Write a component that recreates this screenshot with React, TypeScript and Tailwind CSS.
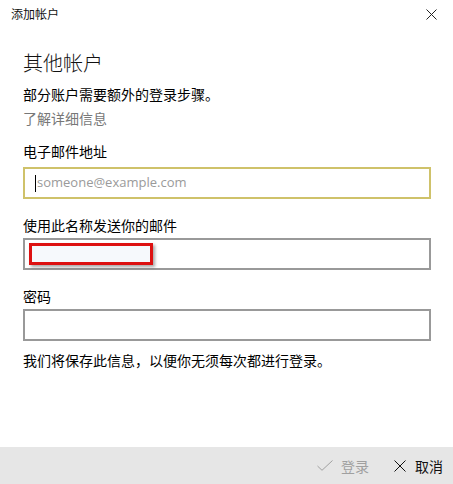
import React from "react";

const cjk = { fontFamily: '"Noto Sans CJK SC", "Microsoft YaHei", sans-serif' };

function XIcon({ size, color, stroke = 1 }: { size: number; color: string; stroke?: number }) {
  return (
    <svg width={size} height={size} viewBox={`0 0 ${size} ${size}`} fill="none">
      <path d={`M0.5 0.5 L${size - 0.5} ${size - 0.5} M${size - 0.5} 0.5 L0.5 ${size - 0.5}`} stroke={color} strokeWidth={stroke} />
    </svg>
  );
}

export default function App() {
  return (
    <div className="w-[453px] h-[484px] bg-white flex flex-col overflow-hidden text-black" style={cjk}>
      <div className="flex-1 flex flex-col">
        <div className="h-[22px] flex items-start justify-between pt-[6px] pl-[11px] pr-[16px]">
          <span className="text-[12px] leading-[16px] text-[#111]">添加帐户</span>
          <div className="mt-[3px]">
            <XIcon size={11} color="#222" />
          </div>
        </div>
        <div className="pl-[23px] pr-[22px] flex flex-col">
          <div className="mt-[27px] text-[20px] leading-[28px] text-[#111] font-light">其他帐户</div>
          <div className="mt-[7px] text-[14px] leading-[20px]">部分账户需要额外的登录步骤。</div>
          <div className="mt-[4px] text-[14px] leading-[20px] text-[#777]">了解详细信息</div>

          <div className="mt-[13px] text-[14px] leading-[20px]">电子邮件地址</div>
          <div className="mt-[6px] h-[32px] border-2 border-[#cfc26a] flex items-center pl-[10px]">
            <div className="w-px h-[17px] bg-black" />
            <span className="text-[13px] text-[#9a9a9a] ml-px" style={{ fontFamily: '"Open Sans", sans-serif' }}>
              someone@example.com
            </span>
          </div>

          <div className="mt-[16px] text-[14px] leading-[20px]">使用此名称发送你的邮件</div>
          <div className="mt-[3px] h-[32px] border-2 border-[#999] relative">
            <div className="absolute left-[4px] top-[3px] w-[124px] h-[22px] border-[3px] border-[#dd1111] bg-[#f6f9fc] shadow-[2px_2px_3px_rgba(0,0,0,0.35)]" />
          </div>

          <div className="mt-[16px] text-[14px] leading-[20px]">密码</div>
          <div className="mt-[3px] h-[32px] border-2 border-[#999]" />

          <div className="mt-[9px] text-[14px] leading-[20px]">我们将保存此信息，以便你无须每次都进行登录。</div>
        </div>
      </div>
      <div className="h-[37px] bg-[#e6e6e6] flex items-center justify-end pr-[10px]">
        <div className="flex items-center">
          <svg width="16" height="11" viewBox="0 0 16 11" fill="none">
            <path d="M0.5 6 L5 10.3 L15.5 0.5" stroke="#a0a0a0" strokeWidth="1" />
          </svg>
          <span className="ml-[8px] text-[14px] leading-[20px] text-[#a0a0a0]">登录</span>
        </div>
        <div className="flex items-center ml-[25px]">
          <XIcon size={12} color="#111" />
          <span className="ml-[9px] text-[14px] leading-[20px] text-[#111]">取消</span>
        </div>
      </div>
    </div>
  );
}
